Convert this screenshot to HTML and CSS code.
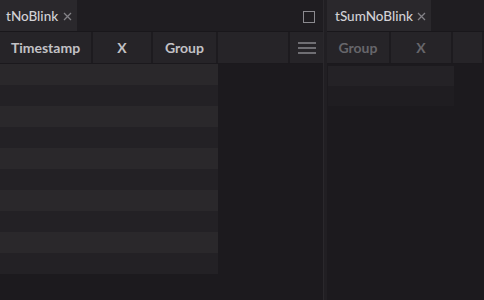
FILE: index.html
```html
<!DOCTYPE html>
<html lang="en">
<head>
    <meta charset="UTF-8">
    <meta name="viewport" content="width=device-width, initial-scale=1.0">
    <title>Tables</title>
    <link rel="stylesheet" href="styles.css">
</head>
<body>
    <div class="panel panel-left">
        <div class="tabbar">
            <div class="tab">tNoBlink
                <svg class="close" width="9" height="9" viewBox="0 0 9 9"><path d="M1 1L8 8M8 1L1 8" /></svg>
            </div>
            <div class="tab-fill"></div>
            <div class="maximize"></div>
        </div>
        <div class="header">
            <div class="cell c-ts">Timestamp</div>
            <div class="cell c-x">X</div>
            <div class="cell c-group">Group</div>
            <div class="cell c-empty"></div>
            <div class="cell c-menu">
                <span class="bars"><i></i><i></i><i></i></span>
            </div>
        </div>
        <div class="grid">
            <div class="rows">
                <div class="row"></div>
                <div class="row"></div>
                <div class="row"></div>
                <div class="row"></div>
                <div class="row"></div>
                <div class="row"></div>
                <div class="row"></div>
                <div class="row"></div>
                <div class="row"></div>
                <div class="row"></div>
            </div>
        </div>
    </div>

    <div class="splitter"></div>

    <div class="panel panel-right">
        <div class="tabbar">
            <div class="tab">tSumNoBlink
                <svg class="close" width="9" height="9" viewBox="0 0 9 9"><path d="M1 1L8 8M8 1L1 8" /></svg>
            </div>
            <div class="tab-fill"></div>
        </div>
        <div class="header dim">
            <div class="cell c-rgroup">Group</div>
            <div class="cell c-rx">X</div>
            <div class="cell c-empty"></div>
        </div>
        <div class="grid">
            <div class="rows rows-right">
                <div class="row"></div>
                <div class="row"></div>
            </div>
        </div>
    </div>
</body>
</html>
```

FILE: styles.css
```css
* {
    padding: 0;
    margin: 0;
    box-sizing: border-box;
}
body {
    width: 484px;
    height: 300px;
    display: flex;
    background-color: #1c1a1e;
    font-family: "Lato", "Noto Sans", sans-serif;
    overflow: hidden;
}
.panel {
    display: flex;
    flex-direction: column;
    height: 100%;
}
.panel-left {
    width: 323px;
}
.panel-right {
    flex: 1;
}
.splitter {
    width: 4px;
    background-color: #211f23;
    border-left: 1px solid #2a282c;
}
.tabbar {
    height: 32px;
    display: flex;
    align-items: stretch;
    background-color: #1f1d21;
    border-bottom: 1px solid #19171b;
}
.tab {
    display: flex;
    align-items: center;
    gap: 5px;
    padding: 0 5px 0 6px;
    background-color: #2a282c;
    color: #d2d1d5;
    font-size: 13.5px;
    font-weight: 500;
    white-space: nowrap;
}
.panel-right .tab {
    padding-left: 8px;
    gap: 4px;
}
.close {
    flex-shrink: 0;
    margin-top: 1px;
}
.close path {
    stroke: #838287;
    stroke-width: 1.3;
    fill: none;
}
.tab-fill {
    flex: 1;
}
.maximize {
    width: 12px;
    height: 12px;
    margin: 11px 8px 0 0;
    border: 1.5px solid #8b8a8f;
}
.header {
    height: 32px;
    display: flex;
    background-color: #262428;
    border-bottom: 1px solid #1b191d;
}
.cell {
    display: flex;
    align-items: center;
    justify-content: center;
    border-right: 2px solid #1d1b1f;
    color: #c2c1c5;
    font-size: 14px;
    font-weight: 700;
}
.c-ts {
    width: 93px;
}
.c-x {
    width: 60px;
}
.c-group {
    width: 65px;
}
.c-empty {
    flex: 1;
}
.c-menu {
    width: 33px;
    border-right: none;
}
.bars {
    display: flex;
    flex-direction: column;
    gap: 3px;
    width: 18px;
}
.bars i {
    display: block;
    height: 2px;
    background-color: #6f6e73;
}
.dim .cell {
    color: #67666b;
}
.c-rgroup {
    width: 64px;
}
.c-rx {
    width: 62px;
}
.grid {
    flex: 1;
    background-color: #1c1a1e;
}
.rows {
    width: 218px;
}
.row {
    height: 21px;
    background-color: #232125;
}
.row:nth-child(odd) {
    background-color: #2a282b;
}
.rows-right {
    width: 126px;
    margin-left: 1px;
    padding-top: 2px;
}
.rows-right .row:nth-child(odd) {
    background-color: #242226;
}
.rows-right .row {
    background-color: #1f1d21;
    height: 20px;
}
```
